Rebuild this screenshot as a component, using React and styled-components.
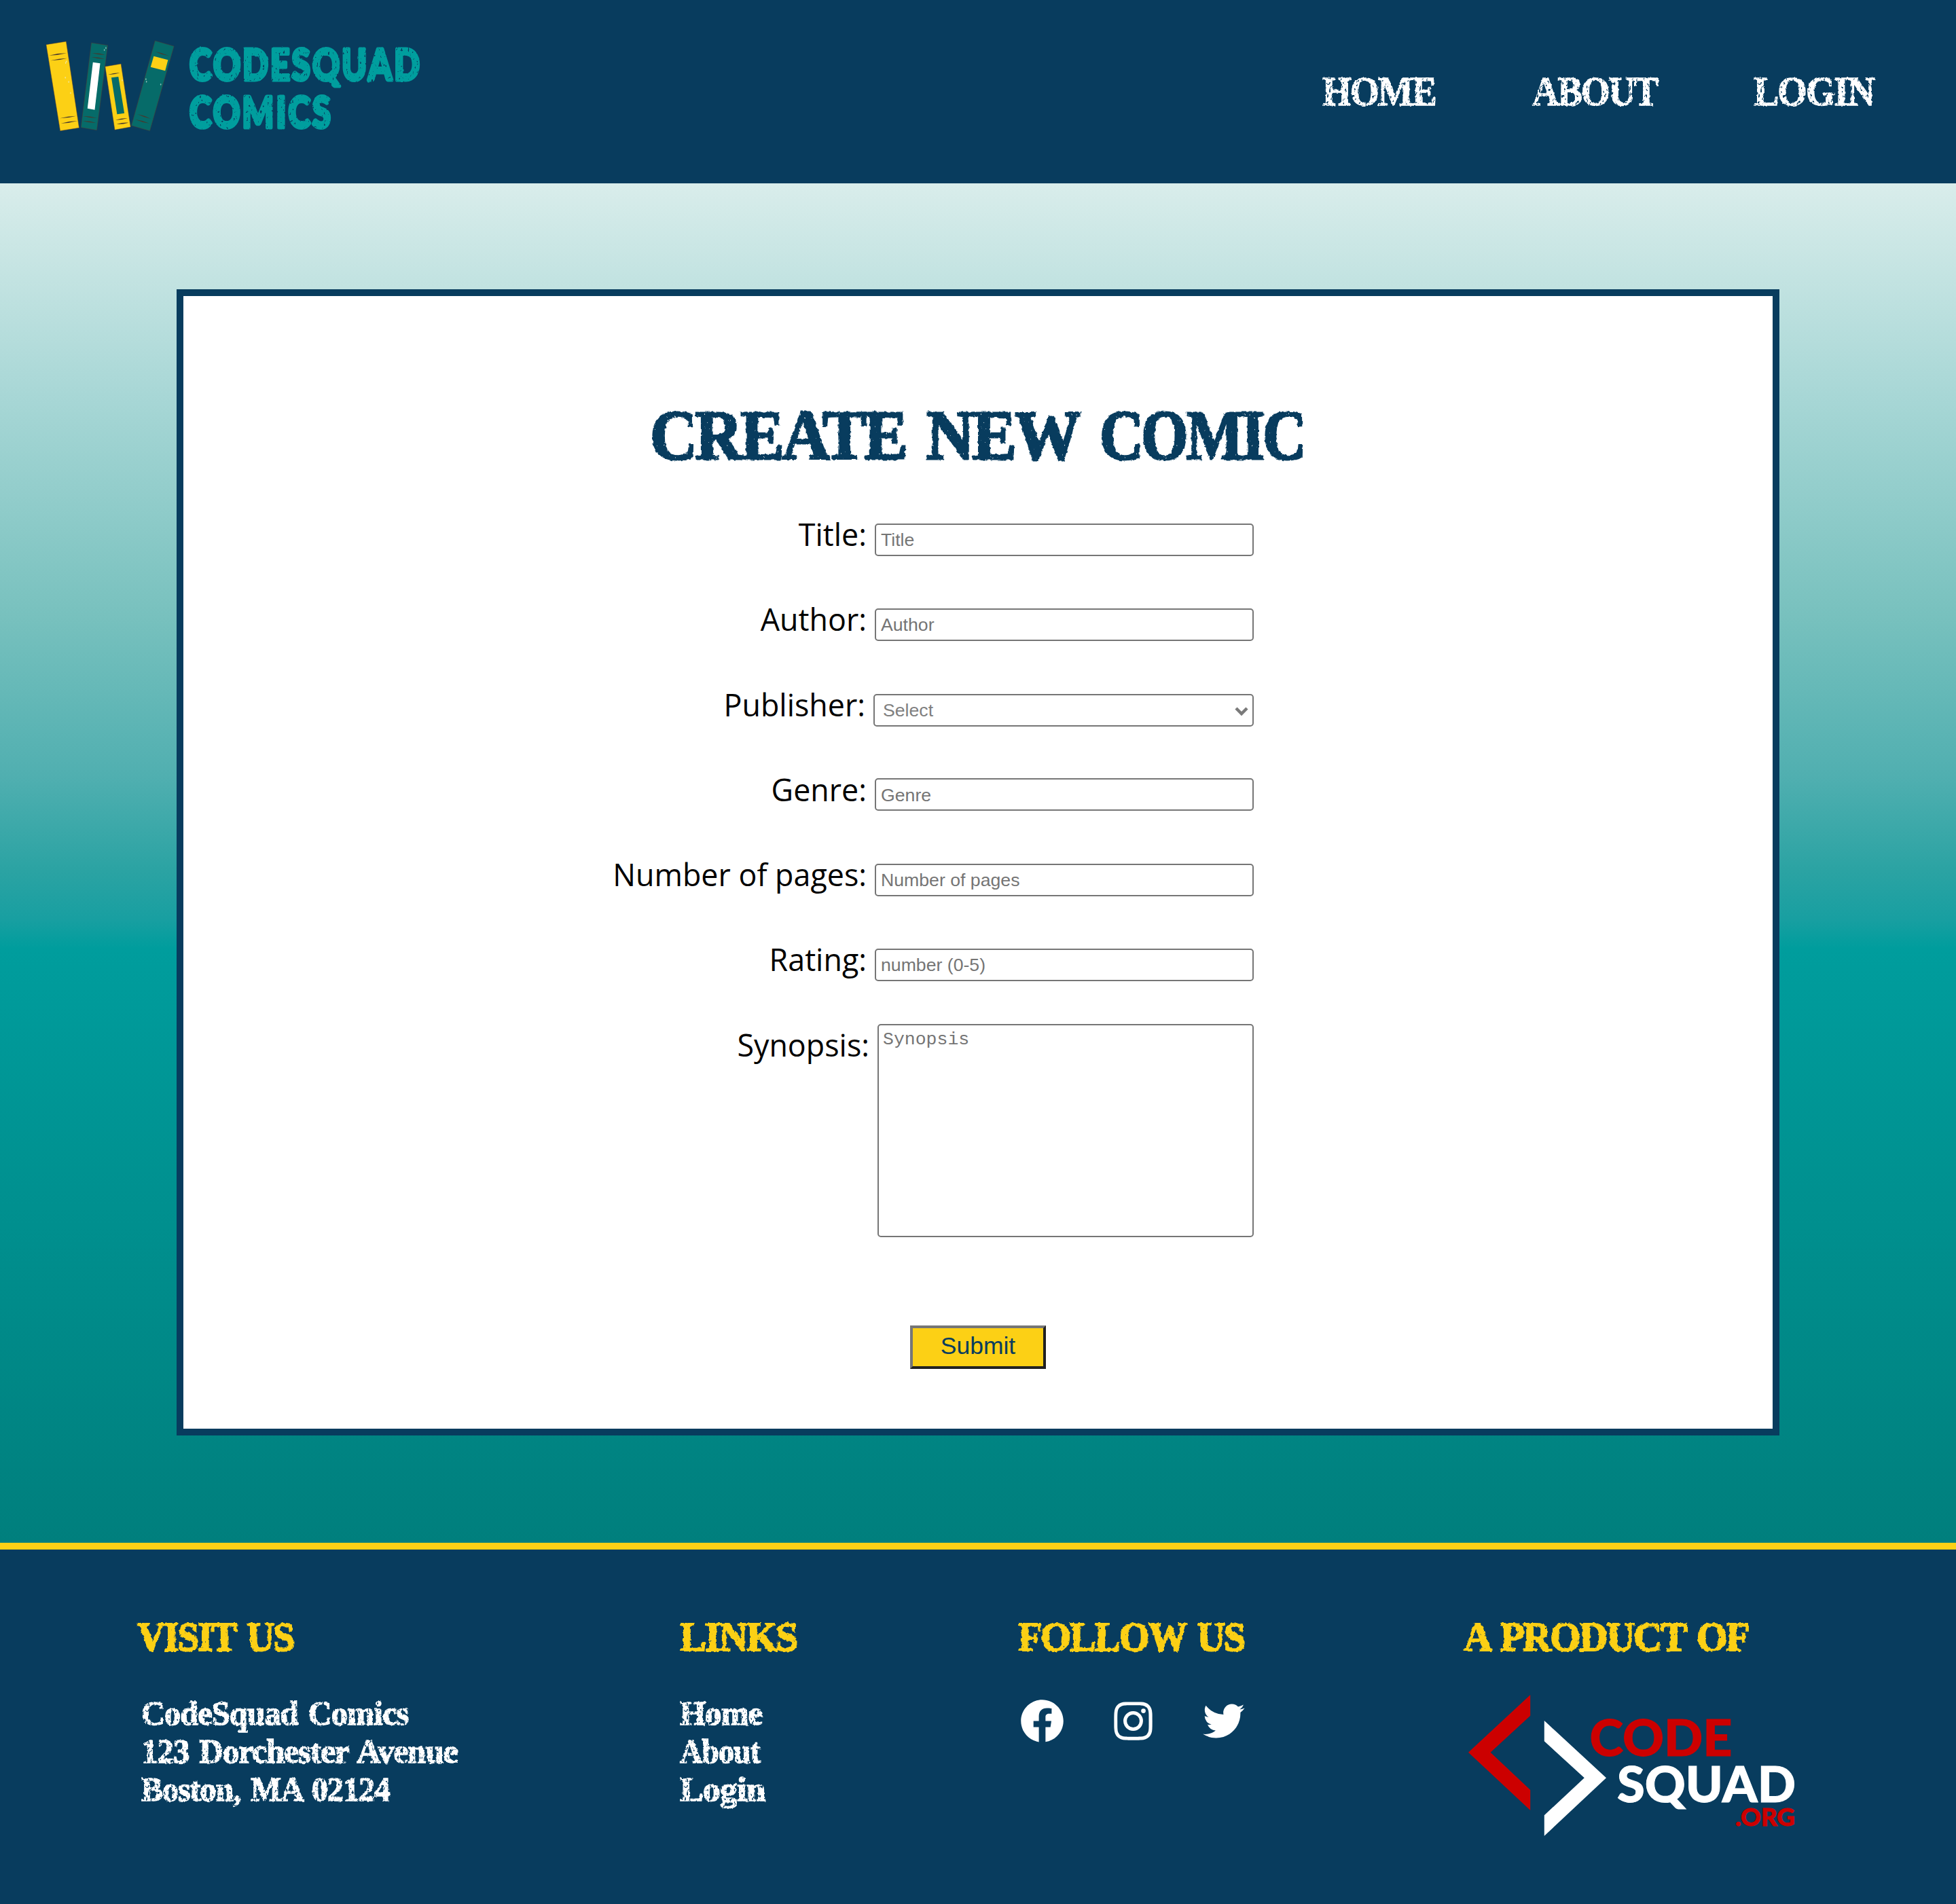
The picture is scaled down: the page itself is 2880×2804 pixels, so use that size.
import React, { useLayoutEffect, useRef, useState } from "react";
import styled, { createGlobalStyle } from "styled-components";
import { BiLogoFacebookCircle, BiLogoInstagram, BiLogoTwitter } from "react-icons/bi";

const navy = "#083c5e";
const yellow = "#fcd015";

const GlobalStyle = createGlobalStyle`
  *, *::before, *::after { box-sizing: border-box; }
  body { margin: 0; }
`;

const Page = styled.div`
  display: flex;
  flex-direction: column;
  min-height: 2804px;
  font-family: "Open Sans", sans-serif;
  background: linear-gradient(
    #ffffff 0%,
    #d9edeb 9.6%,
    #a8d7d6 20.7%,
    #78c1be 32.3%,
    #50afb0 40.8%,
    #2ba3a3 45.7%,
    #189fa1 48.3%,
    #009d9d 49.8%,
    #007f7d 81.1%,
    #006d6b 100%
  );
`;

const Header = styled.header`
  display: flex;
  justify-content: space-between;
  height: 270px;
  padding: 40px 119px 0 40px;
  background: ${navy};
`;

const Nav = styled.nav`
  display: flex;
  gap: 140px;
  padding-top: 59px;
`;

const Main = styled.main`
  display: flex;
  justify-content: center;
  padding: 156px 0 158px;
`;

const Card = styled.section`
  display: flex;
  flex-direction: column;
  align-items: center;
  width: 2360px;
  height: 1688px;
  padding-top: 145px;
  border: 10px solid ${navy};
  background: #fff;
`;

const FitBox = styled.span`
  display: block;
  width: ${(p) => p.$width}px;
  height: ${(p) => p.$line}px;
  font-family: "Liberation Serif", serif;
  font-weight: 700;
  font-size: ${(p) => p.$size}px;
  line-height: ${(p) => p.$line}px;
  letter-spacing: ${(p) => p.$track}em;
  word-spacing: 0.08em;
  color: ${(p) => p.$color};
  white-space: nowrap;
  -webkit-text-stroke: ${(p) => p.$stroke}px ${(p) => p.$color};
  filter: url(#${(p) => p.$texture});
`;

const FitInner = styled.span`
  display: inline-block;
  transform-origin: left center;
`;

/* Condenses a line of display lettering to the width of its column. */
function FitText({ width, size, line, color = "#fff", track = -0.035, stroke = 1.4, texture = "chalk", children }) {
  const ref = useRef(null);
  const [scale, setScale] = useState(1);
  useLayoutEffect(() => {
    setScale(width / (ref.current.offsetWidth - track * size));
  }, [width, size, track]);
  return (
    <FitBox $width={width} $size={size} $line={line} $color={color} $track={track} $stroke={stroke} $texture={texture}>
      <FitInner ref={ref} style={{ transform: `scaleX(${scale})` }}>{children}</FitInner>
    </FitBox>
  );
}

const FilterDefs = styled.svg`
  position: absolute;
  width: 0;
  height: 0;
`;

/* Ragged edges and worn flecks for the display lettering. */
function Texture({ id, grain, ragged, wear }) {
  return (
    <filter id={id} x="-2%" y="-5%" width="104%" height="110%" colorInterpolationFilters="sRGB">
      <feTurbulence type="fractalNoise" baseFrequency={grain} numOctaves="2" seed="4" result="edge" />
      <feDisplacementMap in="SourceGraphic" in2="edge" scale={ragged} xChannelSelector="R" yChannelSelector="G" result="rough" />
      <feTurbulence type="fractalNoise" baseFrequency="0.3 0.22" numOctaves="2" seed="9" />
      <feColorMatrix values={`0 0 0 0 0  0 0 0 0 0  0 0 0 0 0  9 0 0 0 ${wear}`} result="flecks" />
      <feComposite in="rough" in2="flecks" operator="out" />
    </filter>
  );
}

function Textures() {
  return (
    <FilterDefs aria-hidden="true">
      <Texture id="chalk" grain="0.22" ragged="3" wear="-5.6" />
      <Texture id="ink" grain="0.18" ragged="4.5" wear="-6.7" />
      <Texture id="stamp" grain="0.12" ragged="2" wear="-6" />
    </FilterDefs>
  );
}

const NavLink = styled.a`
  text-decoration: none;
`;

const Title = styled.h1`
  display: flex;
  gap: 27px;
  margin: 0 0 55px;
`;

const Form = styled.form`
  display: flex;
  flex-direction: column;
  width: 100%;
`;

const Row = styled.div`
  display: flex;
  justify-content: flex-end;
  align-items: ${(p) => (p.$top ? "flex-start" : "baseline")};
  gap: 12px;
  height: ${(p) => (p.$top ? "auto" : "125.3px")};
  margin-right: 764px;
`;

const Label = styled.label`
  font-size: 44.8px;
  line-height: 61px;
  color: #000;
`;

const Input = styled.input`
  width: 558px;
  height: 48px;
  padding: 2px 7px 0;
  border: 2px solid #767676;
  border-radius: 5px;
  background: #fff;
  font: 26.67px "Liberation Sans", sans-serif;
  &::placeholder { color: #757575; }
`;

const SelectBox = styled.div`
  display: flex;
  justify-content: space-between;
  align-items: baseline;
  width: 560px;
  height: 48px;
  padding: 7px 6px 0 12px;
  border: 2px solid #767676;
  border-radius: 5px;
  background: #fff;
  font: 26.67px/31px "Liberation Sans", sans-serif;
  color: #808080;
`;

const Chevron = styled.svg`
  margin-bottom: 2px;
`;

const TextArea = styled.textarea`
  width: 554px;
  height: 314px;
  padding: 6px 6px;
  border: 2px solid #767676;
  border-radius: 5px;
  resize: none;
  font: 26.5px/30px "Liberation Mono", monospace;
  &::placeholder { color: #757575; }
`;

const Submit = styled.button`
  align-self: center;
  width: 200px;
  height: 64px;
  margin-top: 130px;
  padding: 0 0 2px;
  border: 4px solid;
  border-color: #767676 #212121 #212121 #767676;
  background: ${yellow};
  color: ${navy};
  font: 35.5px "Liberation Sans", sans-serif;
`;

const Footer = styled.footer`
  display: grid;
  grid-template-columns: 799px 498px 656px 1fr;
  height: 532px;
  padding: 92px 0 0 202px;
  border-top: 10px solid ${yellow};
  background: ${navy};
`;

const FooterHeading = styled.h2`
  margin: 0 0 48px;
`;

const Lines = styled.div`
  display: flex;
  flex-direction: column;
  padding: 1px 0 0 ${(p) => p.$indent || 0}px;
`;

const Socials = styled.div`
  display: flex;
  gap: 59px;
  margin: 51px 0 0 -2px;
  color: #fff;
`;

const SponsorLogo = styled.svg`
  display: block;
  margin-left: 5px;
`;

const titleWords = [
  { text: "CREATE", width: 380 },
  { text: "NEW", width: 228 },
  { text: "COMIC", width: 305 },
];

const fields = [
  { label: "Title:", hint: "Title" },
  { label: "Author:", hint: "Author" },
  { label: "Publisher:", select: "Select" },
  { label: "Genre:", hint: "Genre" },
  { label: "Number of pages:", hint: "Number of pages" },
  { label: "Rating:", hint: "number (0-5)" },
];

const flecks = [
  [151, 152], [148, 158], [147, 223], [160, 242], [167, 291], [303, 92],
  [297, 101], [366, 235], [457, 230], [459, 241], [514, 253],
];

function Band({ x1, y1, x2, y2 }) {
  const mx = (x1 + x2) / 2;
  const my = (y1 + y2) / 2;
  return <path d={`M${x1} ${y1}Q${mx} ${my - 5} ${x2} ${y2}Q${mx} ${my + 5} ${x1} ${y1}Z`} />;
}

function BrandLogo() {
  return (
    <svg width="760" height="200" viewBox="0 0 760 200">
      <g transform="scale(0.38265 0.33333)">
        <g stroke="#57382f" strokeWidth="2" strokeOpacity="0.7">
          <path fill={yellow} d="M73 77L150 63L200 445L127 458Z" />
          <path fill="#066b69" d="M247 69L310 80L268 455L207 443Z" />
          <path fill={yellow} d="M300 174L361 162L398 441L337 454Z" />
          <path fill="#066b69" d="M492 60L565 84L472 458L401 435Z" />
        </g>
        <path fill="#fff" d="M253 155L281 160L260 365L232 359Z" />
        <path fill="#066b69" d="M324 223L351 219L374 380L346 385Z" />
        <path fill={yellow} d="M487 128L542 145L531 193L475 176Z" />
        <g fill="#46392f">
          <Band x1={84} y1={125} x2={152} y2={115} />
          <Band x1={90} y1={148} x2={154} y2={137} />
          <Band x1={126} y1={403} x2={188} y2={392} />
          <Band x1={130} y1={425} x2={194} y2={414} />
          <Band x1={250} y1={115} x2={300} y2={122} />
          <Band x1={248} y1={132} x2={298} y2={140} />
          <Band x1={216} y1={393} x2={268} y2={401} />
          <Band x1={214} y1={415} x2={264} y2={422} />
          <Band x1={312} y1={210} x2={356} y2={202} />
          <Band x1={340} y1={410} x2={386} y2={402} />
          <Band x1={344} y1={429} x2={390} y2={422} />
          <Band x1={492} y1={108} x2={546} y2={127} />
          <Band x1={424} y1={384} x2={476} y2={405} />
          <Band x1={416} y1={408} x2={470} y2={425} />
        </g>
        <g fill="#e9f3ea" fillOpacity="0.6">
          {flecks.map(([x, y]) => (
            <ellipse key={`${x}-${y}`} cx={x} cy={y} rx="2" ry="4" />
          ))}
        </g>
      </g>
      <g
        fill="#009e9e"
        stroke="#009e9e"
        strokeWidth="5"
        strokeLinejoin="round"
        fontFamily="Lato, sans-serif"
        fontWeight="900"
        fontSize="63"
        letterSpacing="4"
        filter="url(#stamp)"
      >
        <text x="239" y="77.5" textLength="342" lengthAdjust="spacingAndGlyphs">CODESQUAD</text>
        <text x="239" y="148" textLength="211" lengthAdjust="spacingAndGlyphs">COMICS</text>
      </g>
    </svg>
  );
}

function CodeSquadLogo() {
  return (
    <SponsorLogo width="490" height="214" viewBox="2160 2494 490 214">
      <path fill="#c00" d="M2253.2 2496V2526.7L2194.6 2580.7L2253.2 2636V2666L2162 2580.7Z" />
      <path fill="#fff" d="M2273.8 2534V2564.3L2332.8 2618.3L2273.8 2673.3V2703.7L2365 2618.3Z" />
      <g fontFamily="Lato, sans-serif" fontWeight="900" strokeWidth="1">
        <text fill="#c00" stroke="#c00" x="2340.5" y="2586.3" fontSize="74" textLength="210" lengthAdjust="spacingAndGlyphs">CODE</text>
        <text fill="#fff" stroke="#fff" x="2381" y="2654" fontSize="73" textLength="263" lengthAdjust="spacingAndGlyphs">SQUAD</text>
        <text fill="#c00" stroke="#c00" x="2555" y="2688.5" fontSize="36" textLength="88" lengthAdjust="spacingAndGlyphs">.ORG</text>
      </g>
    </SponsorLogo>
  );
}

function Heading({ width, children }) {
  return (
    <FooterHeading>
      <FitText width={width} size={62} line={72} color={yellow} stroke={2} texture="ink">{children}</FitText>
    </FooterHeading>
  );
}

function FooterLine({ width, children }) {
  return <FitText width={width} size={51} line={56} track={-0.02}>{children}</FitText>;
}

export default function App() {
  return (
    <Page>
      <GlobalStyle />
      <Textures />
      <Header>
        <BrandLogo />
        <Nav>
          <NavLink><FitText width={169} size={61} line={72}>HOME</FitText></NavLink>
          <NavLink><FitText width={186} size={61} line={72}>ABOUT</FitText></NavLink>
          <NavLink><FitText width={179} size={61} line={72}>LOGIN</FitText></NavLink>
        </Nav>
      </Header>
      <Main>
        <Card>
          <Title>
            {titleWords.map((w) => (
              <FitText key={w.text} width={w.width} size={104} line={120} color={navy} stroke={3} texture="ink">{w.text}</FitText>
            ))}
          </Title>
          <Form>
            {fields.map((f) => (
              <Row key={f.label}>
                <Label>{f.label}</Label>
                {f.select ? (
                  <SelectBox>
                    {f.select}
                    <Chevron width="20" height="14" viewBox="0 0 20 14" fill="none" stroke="#7a7a7a" strokeWidth="4.5">
                      <path d="M2 2L10 10L18 2" />
                    </Chevron>
                  </SelectBox>
                ) : (
                  <Input placeholder={f.hint} />
                )}
              </Row>
            ))}
            <Row $top>
              <Label>Synopsis:</Label>
              <TextArea placeholder="Synopsis" />
            </Row>
            <Submit type="button">Submit</Submit>
          </Form>
        </Card>
      </Main>
      <Footer>
        <div>
          <Heading width={232}>VISIT US</Heading>
          <Lines $indent={6}>
            <FooterLine width={394}>CodeSquad Comics</FooterLine>
            <FooterLine width={466}>123 Dorchester Avenue</FooterLine>
            <FooterLine width={367}>Boston, MA 02124</FooterLine>
          </Lines>
        </div>
        <div>
          <Heading width={174}>LINKS</Heading>
          <Lines>
            <FooterLine width={122}>Home</FooterLine>
            <FooterLine width={119}>About</FooterLine>
            <FooterLine width={126}>Login</FooterLine>
          </Lines>
        </div>
        <div>
          <Heading width={335}>FOLLOW US</Heading>
          <Socials>
            <BiLogoFacebookCircle size={75} />
            <BiLogoInstagram size={75} />
            <BiLogoTwitter size={75} />
          </Socials>
        </div>
        <div>
          <Heading width={422}>A PRODUCT OF</Heading>
          <CodeSquadLogo />
        </div>
      </Footer>
    </Page>
  );
}
